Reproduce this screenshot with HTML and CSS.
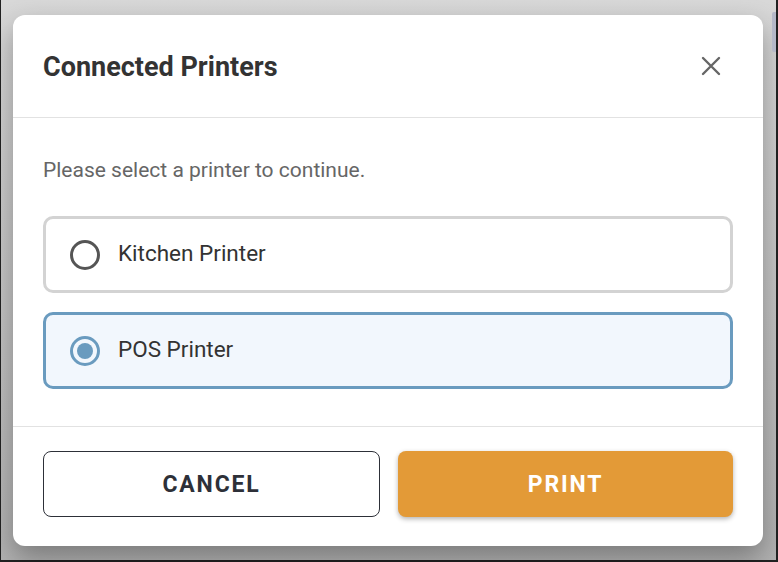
FILE: index.html
```html
<!DOCTYPE html>
<html>
<head>
<meta charset="utf-8">
<link rel="stylesheet" href="styles.css">
</head>
<body>
<div class="stage">
  <div class="dialog">
    <div class="dialog-header">
      <h2 class="dialog-title">Connected Printers</h2>
      <button class="close-btn" aria-label="Close">
        <svg width="20" height="20" viewBox="0 0 20 20"><path d="M2 2 L18 18 M18 2 L2 18" stroke="#666" stroke-width="2.4" stroke-linecap="round"/></svg>
      </button>
    </div>
    <div class="dialog-body">
      <p class="hint">Please select a printer to continue.</p>
      <div class="options">
        <label class="option">
          <span class="radio"></span>
          <span class="option-label">Kitchen Printer</span>
        </label>
        <label class="option selected">
          <span class="radio"><span class="dot"></span></span>
          <span class="option-label">POS Printer</span>
        </label>
      </div>
    </div>
    <div class="dialog-footer">
      <button class="btn btn-cancel">CANCEL</button>
      <button class="btn btn-print">PRINT</button>
    </div>
  </div>
  <div class="scroll-strip"></div>
</div>
</body>
</html>
```

FILE: styles.css
```css
* { box-sizing: border-box; }
html, body { margin: 0; padding: 0; }
body { font-family: Roboto, "Noto Sans", sans-serif; }

.stage {
  position: relative;
  width: 778px;
  height: 562px;
  background: linear-gradient(#d8d8d8 0%, #c4c4c4 55%, #b2b2b2 100%);
  border-left: 1px solid #222;
  border-right: 2px solid #222;
  border-bottom: 2px solid #222;
  padding: 15px 0 0 12px;
}

.scroll-strip {
  position: absolute;
  right: 0;
  top: 12px;
  width: 4px;
  height: 40px;
  background: #b4b8c8;
  border-radius: 2px 0 0 2px;
}

.dialog {
  width: 750px;
  height: 531px;
  background: #fff;
  border-radius: 12px;
  box-shadow: 0 12px 28px rgba(0, 0, 0, 0.32);
  display: flex;
  flex-direction: column;
}

.dialog-header {
  display: flex;
  align-items: center;
  justify-content: space-between;
  padding: 37px 30px 35px;
  border-bottom: 1px solid #e2e2e2;
}

.dialog-title {
  margin: 0;
  font-size: 27px;
  line-height: 30px;
  font-weight: 700;
  color: #333;
}

.close-btn {
  width: 44px;
  height: 44px;
  margin: -8px 0 -6px;
  padding: 0;
  border: 0;
  background: transparent;
  display: flex;
  align-items: center;
  justify-content: center;
}

.dialog-body {
  padding: 39px 30px 37px;
  border-bottom: 1px solid #e2e2e2;
}

.hint {
  margin: 0 0 33px;
  font-size: 21px;
  line-height: 26px;
  color: #666;
}

.options {
  display: flex;
  flex-direction: column;
  gap: 19px;
}

.option {
  display: flex;
  align-items: center;
  gap: 18px;
  height: 77px;
  padding: 0 24px;
  border: 3px solid #d3d3d3;
  border-radius: 10px;
  background: #fff;
}

.option.selected {
  border-color: #6a9bbf;
  background: #f2f7fd;
}

.radio {
  width: 30px;
  height: 30px;
  border-radius: 50%;
  border: 3px solid #555;
  display: flex;
  align-items: center;
  justify-content: center;
  flex: none;
}

.option.selected .radio { border-color: #6a9bbf; }

.dot {
  width: 16px;
  height: 16px;
  border-radius: 50%;
  background: #6a9bbf;
}

.option-label {
  font-size: 22.5px;
  line-height: 28px;
  padding-bottom: 3px;
  color: #333;
}

.dialog-footer {
  display: flex;
  gap: 18px;
  padding: 24px 30px 28px;
}

.btn {
  flex: 1;
  height: 66px;
  border-radius: 8px;
  font-family: Roboto, "Noto Sans", sans-serif;
  font-size: 23px;
  font-weight: 700;
  letter-spacing: 1.8px;
}

.btn-cancel {
  background: #fff;
  border: 1px solid #2d3038;
  color: #2d3038;
}

.btn-print {
  background: #e39a37;
  border: 0;
  color: #fff;
  box-shadow: 0 2px 5px rgba(0, 0, 0, 0.3);
}
```
